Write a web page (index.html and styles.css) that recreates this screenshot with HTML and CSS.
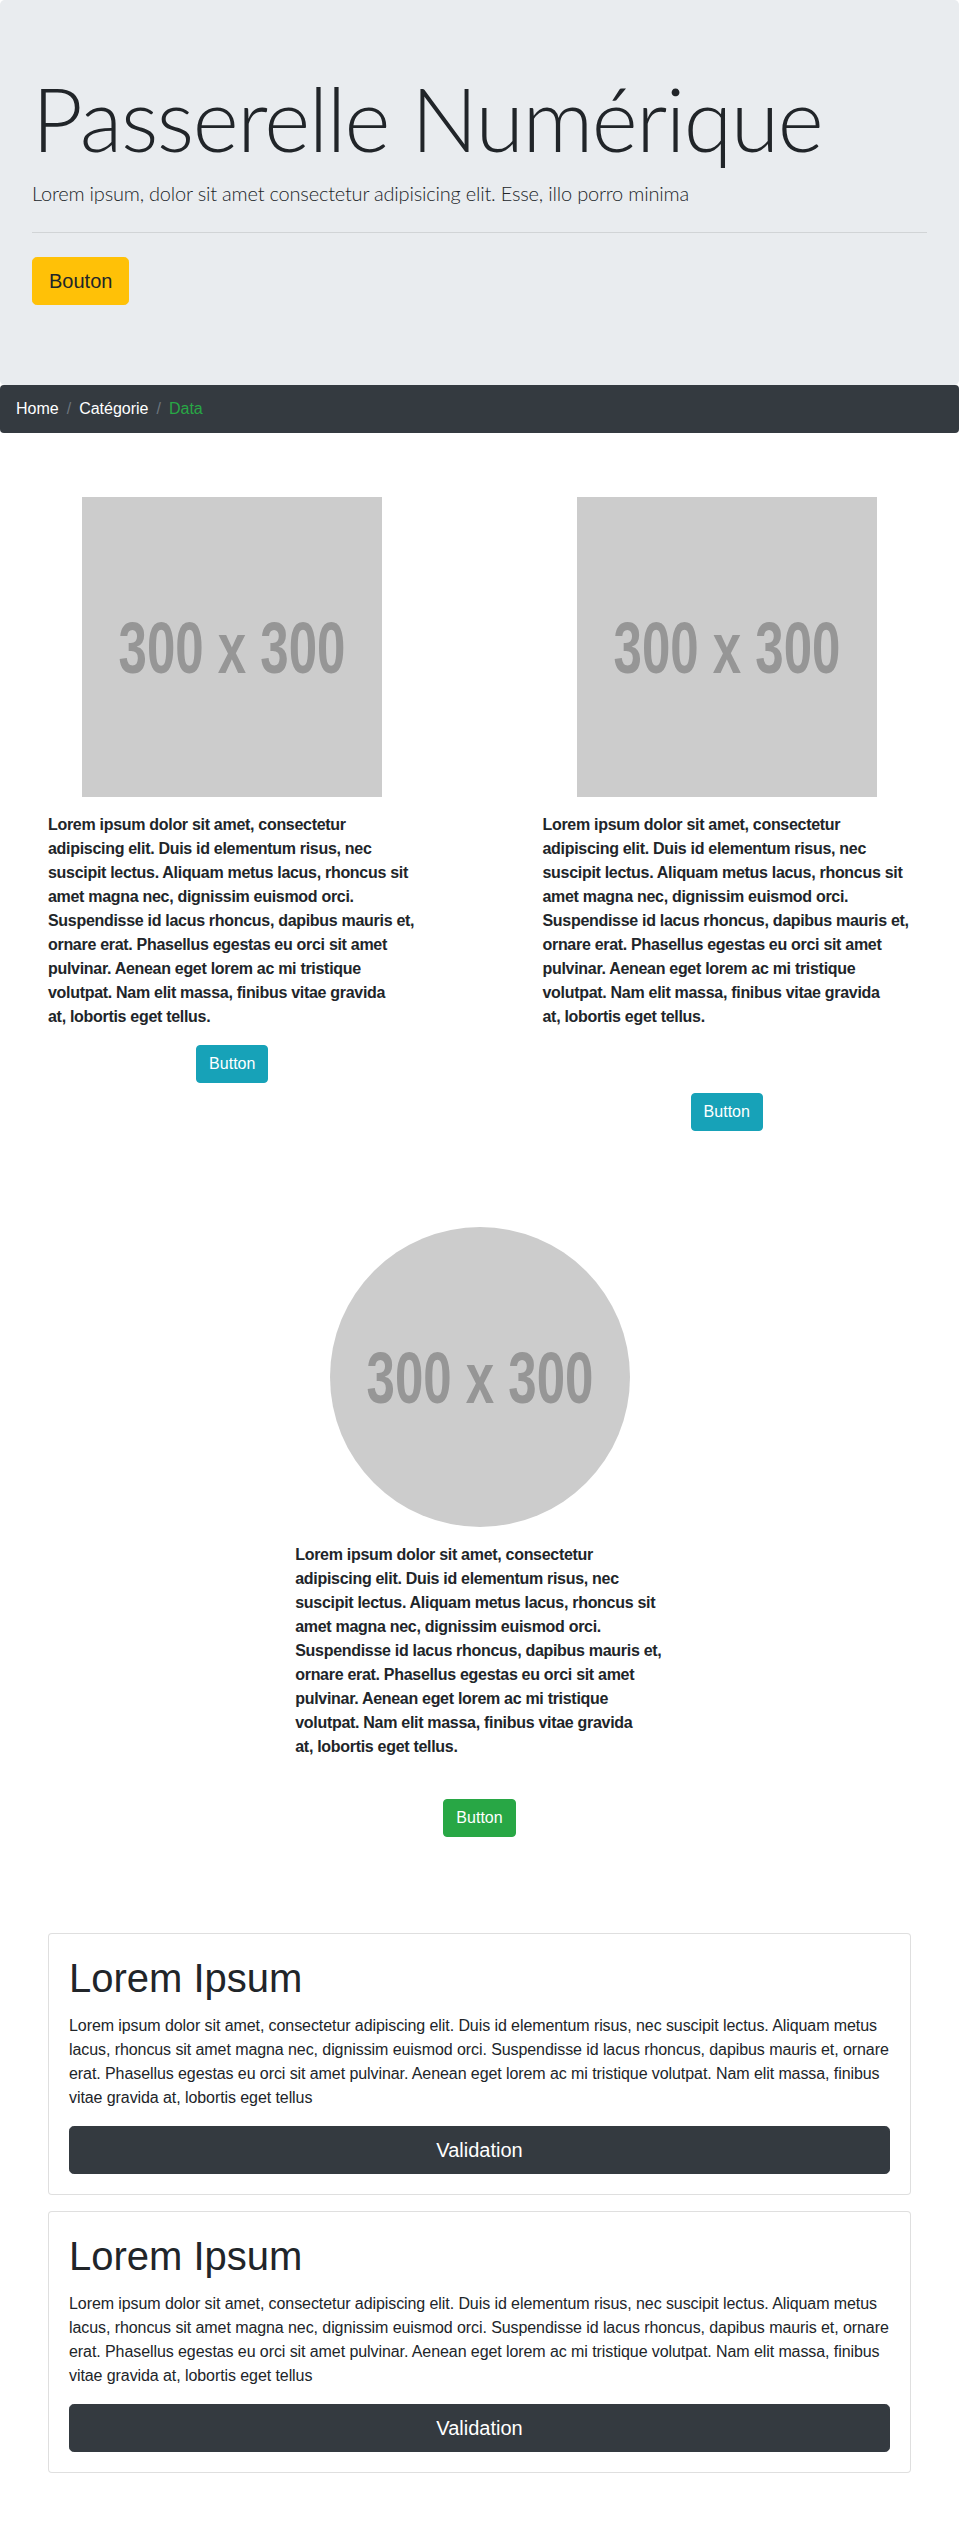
FILE: index.html
```html
<!DOCTYPE html>
<html lang="fr">
<head>
<meta charset="utf-8">
<title>Passerelle Numérique</title>
<link rel="stylesheet" href="styles.css">
</head>
<body>
<header class="jumbotron">
  <h1 class="display">Passerelle Numérique</h1>
  <p class="lead">Lorem ipsum, dolor sit amet consectetur adipisicing elit. Esse, illo porro minima</p>
  <hr class="divider">
  <p class="lead-action"><a class="btn btn-warning btn-lg" href="#">Bouton</a></p>
</header>

<nav class="crumbs-nav">
  <ol class="crumbs">
    <li class="crumb">Home</li>
    <li class="crumb">Catégorie</li>
    <li class="crumb crumb-active">Data</li>
  </ol>
</nav>

<section class="pair">
  <article class="item">
    <svg class="ph" viewBox="0 0 300 300" width="300" height="300"><rect class="ph-bg" width="300" height="300"/><text class="ph-text" x="0" y="0" transform="translate(150 176) scale(0.773 1.1)" text-anchor="middle">300 x 300</text></svg>
    <p class="item-text">Lorem ipsum dolor sit amet, consectetur<br>adipiscing elit. Duis id elementum risus, nec<br>suscipit lectus. Aliquam metus lacus, rhoncus sit<br>amet magna nec, dignissim euismod orci.<br>Suspendisse id lacus rhoncus, dapibus mauris et,<br>ornare erat. Phasellus egestas eu orci sit amet<br>pulvinar. Aenean eget lorem ac mi tristique<br>volutpat. Nam elit massa, finibus vitae gravida<br>at, lobortis eget tellus.</p>
    <a class="btn btn-info" href="#">Button</a>
  </article>
  <article class="item">
    <svg class="ph" viewBox="0 0 300 300" width="300" height="300"><rect class="ph-bg" width="300" height="300"/><text class="ph-text" x="0" y="0" transform="translate(150 176) scale(0.773 1.1)" text-anchor="middle">300 x 300</text></svg>
    <p class="item-text">Lorem ipsum dolor sit amet, consectetur<br>adipiscing elit. Duis id elementum risus, nec<br>suscipit lectus. Aliquam metus lacus, rhoncus sit<br>amet magna nec, dignissim euismod orci.<br>Suspendisse id lacus rhoncus, dapibus mauris et,<br>ornare erat. Phasellus egestas eu orci sit amet<br>pulvinar. Aenean eget lorem ac mi tristique<br>volutpat. Nam elit massa, finibus vitae gravida<br>at, lobortis eget tellus.</p>
    <a class="btn btn-info btn-low" href="#">Button</a>
  </article>
</section>

<section class="single">
  <article class="item">
    <svg class="ph" viewBox="0 0 300 300" width="300" height="300"><circle class="ph-bg" cx="150" cy="150" r="150"/><text class="ph-text" x="0" y="0" transform="translate(150 176) scale(0.773 1.1)" text-anchor="middle">300 x 300</text></svg>
    <p class="item-text">Lorem ipsum dolor sit amet, consectetur<br>adipiscing elit. Duis id elementum risus, nec<br>suscipit lectus. Aliquam metus lacus, rhoncus sit<br>amet magna nec, dignissim euismod orci.<br>Suspendisse id lacus rhoncus, dapibus mauris et,<br>ornare erat. Phasellus egestas eu orci sit amet<br>pulvinar. Aenean eget lorem ac mi tristique<br>volutpat. Nam elit massa, finibus vitae gravida<br>at, lobortis eget tellus.</p>
    <a class="btn btn-success btn-mid" href="#">Button</a>
  </article>
</section>

<section class="cards">
  <div class="card">
    <h1 class="card-title">Lorem Ipsum</h1>
    <p class="card-text">Lorem ipsum dolor sit amet, consectetur adipiscing elit. Duis id elementum risus, nec suscipit lectus. Aliquam metus<br>lacus, rhoncus sit amet magna nec, dignissim euismod orci. Suspendisse id lacus rhoncus, dapibus mauris et, ornare<br>erat. Phasellus egestas eu orci sit amet pulvinar. Aenean eget lorem ac mi tristique volutpat. Nam elit massa, finibus<br>vitae gravida at, lobortis eget tellus</p>
    <a class="btn btn-dark btn-lg btn-block" href="#">Validation</a>
  </div>
  <div class="card">
    <h1 class="card-title">Lorem Ipsum</h1>
    <p class="card-text">Lorem ipsum dolor sit amet, consectetur adipiscing elit. Duis id elementum risus, nec suscipit lectus. Aliquam metus<br>lacus, rhoncus sit amet magna nec, dignissim euismod orci. Suspendisse id lacus rhoncus, dapibus mauris et, ornare<br>erat. Phasellus egestas eu orci sit amet pulvinar. Aenean eget lorem ac mi tristique volutpat. Nam elit massa, finibus<br>vitae gravida at, lobortis eget tellus</p>
    <a class="btn btn-dark btn-lg btn-block" href="#">Validation</a>
  </div>
</section>
</body>
</html>
```

FILE: styles.css
```css
* { box-sizing: border-box; }

html, body {
  margin: 0;
  padding: 0;
}

body {
  font-family: "Liberation Sans", Arial, sans-serif;
  font-size: 16px;
  line-height: 1.5;
  color: #212529;
  background: #fff;
  overflow-x: hidden;
}

/* ---------- Jumbotron ---------- */
.jumbotron {
  background: #e9ecef;
  padding: 64px 32px;
  border-radius: 4.8px;
}

.display {
  font-family: "Lato", "Liberation Sans", sans-serif;
  font-weight: 300;
  font-size: 88px;
  line-height: 1.2;
  letter-spacing: -1.5px;
  margin: 0 0 8px;
  padding-top: 2px;
  height: 105.6px;
}

.lead {
  font-family: "Lato", "Liberation Sans", sans-serif;
  font-weight: 300;
  font-size: 20px;
  line-height: 30px;
  letter-spacing: -0.2px;
  margin: 0 0 16px;
}

.divider {
  margin: 24px 0;
  border: 0;
  border-top: 1px solid rgba(0, 0, 0, 0.1);
  height: 0;
}

.lead-action {
  margin: 0 0 16px;
  font-size: 20px;
  line-height: 30px;
}

/* ---------- Buttons ---------- */
.btn {
  display: inline-block;
  font-size: 16px;
  line-height: 24px;
  padding: 6px 12px;
  border: 1px solid transparent;
  border-radius: 4px;
  text-decoration: none;
  text-align: center;
  color: #fff;
  font-weight: 400;
}

.btn-lg {
  font-size: 20px;
  line-height: 30px;
  padding: 8px 16px;
  border-radius: 4.8px;
}

.btn-warning { background: #ffc107; border-color: #ffc107; color: #212529; }
.btn-info { background: #17a2b8; border-color: #17a2b8; }
.btn-success { background: #28a745; border-color: #28a745; }
.btn-dark { background: #343a40; border-color: #343a40; }

.btn-block {
  display: block;
  width: 100%;
}

/* ---------- Breadcrumb ---------- */
.crumbs-nav {
  margin: 0 0 16px;
}

.crumbs {
  display: flex;
  list-style: none;
  margin: 0;
  padding: 12px 16px;
  background: #343a40;
  border-radius: 4px;
}

.crumb {
  color: #fff;
}

.crumb + .crumb::before {
  content: "/";
  display: inline-block;
  padding: 0 8px;
  color: #6c757d;
}

.crumb-active {
  color: #28a745;
}

/* ---------- Items ---------- */
.pair {
  display: grid;
  grid-template-columns: 1fr 1fr;
  column-gap: 30px;
  padding-top: 48px;
  align-items: start;
}

.single {
  display: grid;
  grid-template-columns: 464.5px;
  justify-content: center;
  padding-top: 96px;
}

.item {
  display: flex;
  flex-direction: column;
  align-items: center;
}

.ph {
  display: block;
  width: 300px;
  height: 300px;
  margin-bottom: 16px;
}

.ph-bg { fill: #cccccc; }

.ph-text {
  font-family: "Liberation Sans", Arial, sans-serif;
  font-weight: 700;
  font-size: 66px;
  fill: #969696;
}

.item-text {
  align-self: stretch;
  margin: 0 0 16px;
  padding: 0 48px;
  font-weight: 700;
  letter-spacing: -0.3px;
  white-space: nowrap;
}

.btn-low { margin-top: 48px; }
.btn-mid { margin-top: 24px; }

/* ---------- Cards ---------- */
.cards {
  padding: 96px 48px 48px;
}

.card {
  border: 1px solid rgba(0, 0, 0, 0.125);
  border-radius: 4px;
  padding: 20px;
  margin-bottom: 16px;
  background: #fff;
}

.card-title {
  font-size: 40px;
  font-weight: 400;
  line-height: 1.2;
  margin: 0 0 12px;
}

.card-text {
  margin: 0 0 16px;
  letter-spacing: -0.08px;
  white-space: nowrap;
}
```
